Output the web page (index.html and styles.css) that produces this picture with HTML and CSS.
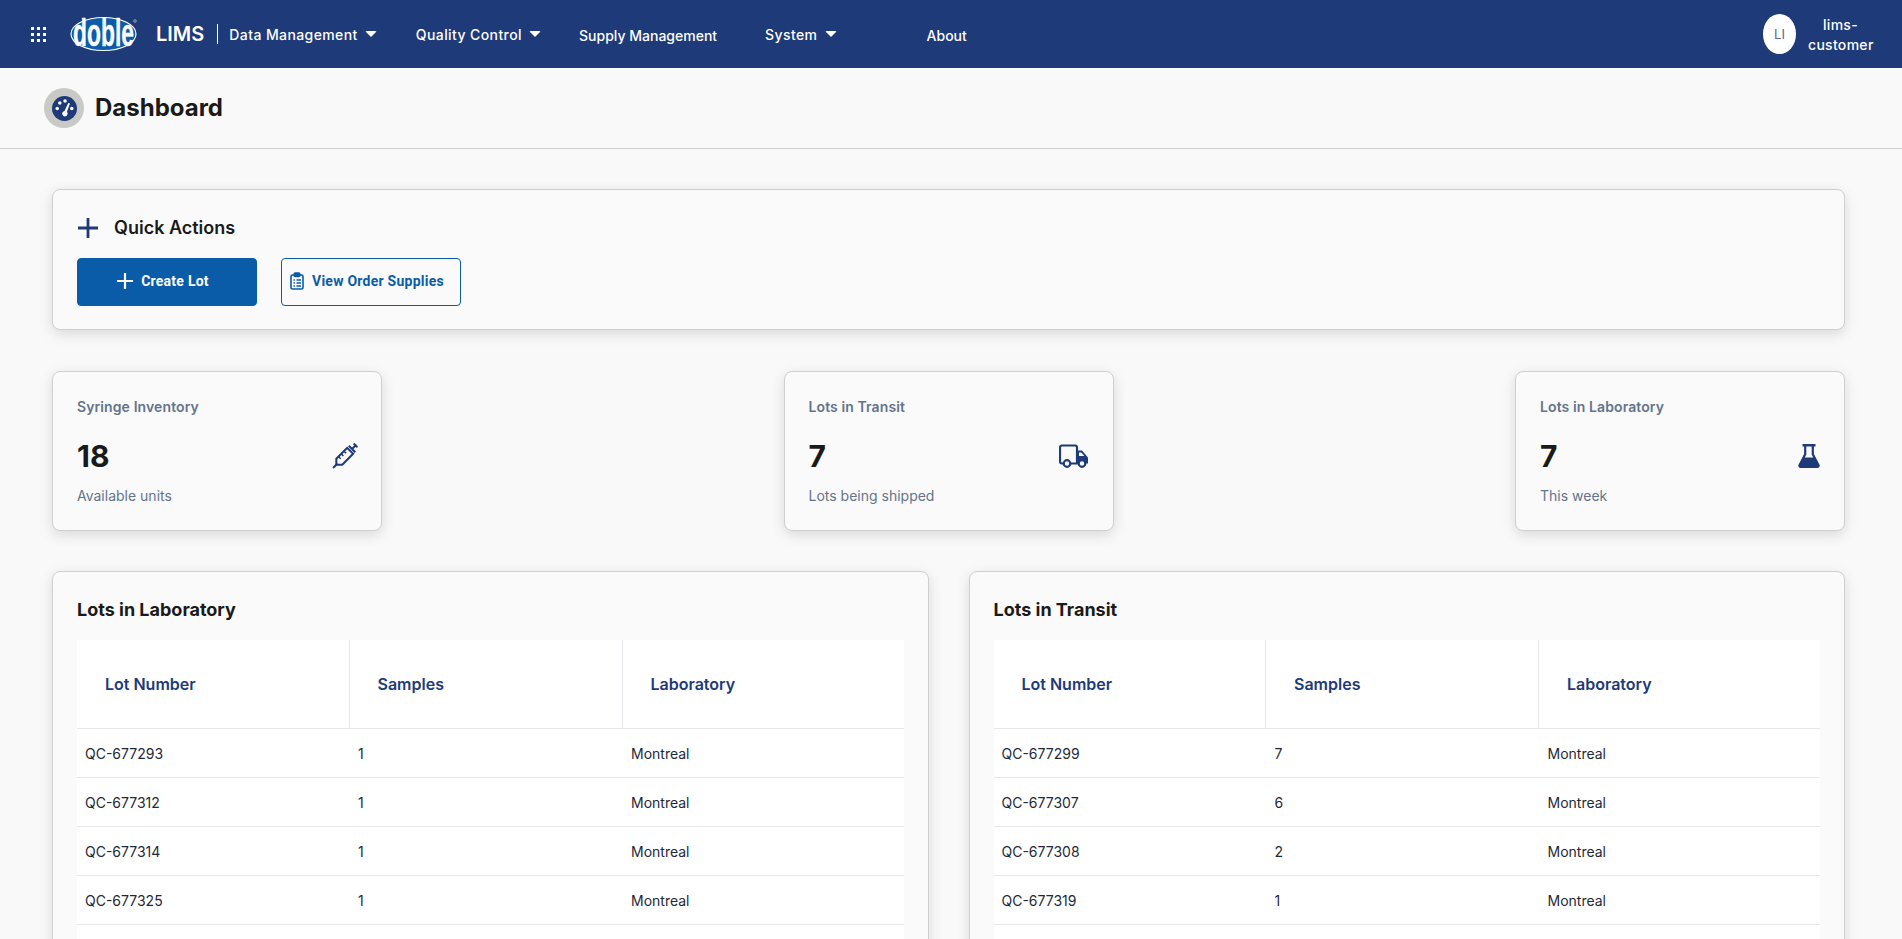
FILE: index.html
```html
<!DOCTYPE html>
<html>
    <head>
        <meta charset="utf-8">
        <title>Dashboard</title>
        <link rel="stylesheet" href="styles.css">
    </head>
    <body>
        <header class="topbar">
            <svg class="apps" viewBox="0 0 15 15" width="15" height="15">
                <g fill="#fff">
                    <rect x="0" y="0" width="3" height="3"/><rect x="6" y="0" width="3" height="3"/><rect x="12" y="0" width="3" height="3"/>
                    <rect x="0" y="6" width="3" height="3"/><rect x="6" y="6" width="3" height="3"/><rect x="12" y="6" width="3" height="3"/>
                    <rect x="0" y="12" width="3" height="3"/><rect x="6" y="12" width="3" height="3"/><rect x="12" y="12" width="3" height="3"/>
                </g>
            </svg>
            <svg class="logo" viewBox="0 -2 68 48" width="68" height="48">
                <ellipse cx="33.500" cy="22" rx="32.500" ry="16.500" fill="#0b5cab" stroke="#fff" stroke-width="1.200"/>
                <text transform="translate(33.500 34) scale(0.600 1)" text-anchor="middle" class="logo-text">doble</text>
                <circle cx="65" cy="9" r="1.300" fill="none" stroke="#fff" stroke-width="0.500"/>
            </svg>
            <span class="brand">LIMS</span>
            <nav class="nav">
                <a class="nav-item nav-first">Data Management <i class="caret"></i></a>
                <a class="nav-item nav-quality">Quality Control <i class="caret"></i></a>
                <a class="nav-item nav-plain nav-supply">Supply Management</a>
                <a class="nav-item nav-system">System <i class="caret"></i></a>
                <a class="nav-item nav-plain">About</a>
            </nav>
            <div class="user">
                <span class="avatar">LI</span>
                <span class="username">lims-<br>customer</span>
            </div>
        </header>

        <div class="titlebar">
            <span class="title-icon">
                <svg viewBox="0 0 24 24" width="25" height="25">
                    <circle cx="12" cy="12" r="12" fill="#1e3a78"/>
                    <g fill="#fff">
                        <circle cx="5" cy="12" r="1.700"/><circle cx="7.500" cy="6.800" r="1.700"/><circle cx="12.500" cy="4.800" r="1.700"/><circle cx="19" cy="12" r="1.700"/>
                        <path d="M15.600 6.600l1.700.6-3 8a2.600 2.600 0 1 1-2.300-.8z"/>
                    </g>
                </svg>
            </span>
            <h1>Dashboard</h1>
        </div>

        <main class="content">
            <section class="card quick">
                <div class="quick-head">
                    <svg viewBox="0 0 20 20" width="20" height="20"><path d="M10 0v20M0 10h20" stroke="#1e3a78" stroke-width="2.800"/></svg>
                    <h2>Quick Actions</h2>
                </div>
                <div class="quick-btns">
                    <button class="btn btn-solid">
                        <svg viewBox="0 0 16 16" width="16" height="16"><path d="M8 0v16M0 8h16" stroke="#fff" stroke-width="2.200"/></svg>
                        Create Lot
                    </button>
                    <button class="btn btn-outline">
                        <svg viewBox="0 0 14 18" width="14" height="18" fill="none" stroke="#0a5ca8" stroke-width="1.600">
                            <rect x="1" y="3" width="12" height="14" rx="1.500"/>
                            <rect x="4.200" y="1" width="5.600" height="3.400" rx="1" fill="#0a5ca8"/>
                            <path d="M3.500 8h1.400M6.500 8h4.500M3.500 11h1.400M6.500 11h4.500M3.500 14h1.400M6.500 14h4.500" stroke-width="1.300"/>
                        </svg>
                        View Order Supplies
                    </button>
                </div>
            </section>

            <section class="stats">
                <div class="card stat">
                    <div class="stat-label">Syringe Inventory</div>
                    <div class="stat-row">
                        <span class="stat-num">18</span>
                        <svg class="syringe" viewBox="0 0 24 24" width="26" height="26" fill="none" stroke="#1e3a78" stroke-width="1.900">
                            <path d="M1 23l4-4M15.500 2.500l6 6M18.700 5.300L22.500 1.500M20 .5l3.500 3.500"/>
                            <path d="M14 4.500l5.500 5.500L9.500 20H4v-5.500z"/>
                            <path d="M11 7.500l2 2M8.500 10l2 2M6 12.500l2 2" stroke-width="1.400"/>
                        </svg>
                    </div>
                    <div class="stat-sub">Available units</div>
                </div>
                <div class="card stat">
                    <div class="stat-label">Lots in Transit</div>
                    <div class="stat-row">
                        <span class="stat-num">7</span>
                        <svg viewBox="0 0 30 24" width="30" height="24">
                            <path d="M4.500 19.500H3a2 2 0 0 1-2-2V3.500a2 2 0 0 1 2-2h13a2 2 0 0 1 2 2v16h-6" fill="none" stroke="#1e3a78" stroke-width="2.200"/>
                            <path d="M18 6.500h5l6 7V19.500h-3.500L18 19z" fill="#1e3a78"/>
                            <path d="M20 8.500h2.300l3 3.500H20z" fill="#fafafa"/>
                            <circle cx="8" cy="19.500" r="3.300" fill="#fafafa" stroke="#1e3a78" stroke-width="2.200"/>
                            <circle cx="23" cy="19.500" r="3.300" fill="#fafafa" stroke="#1e3a78" stroke-width="2.200"/>
                        </svg>
                    </div>
                    <div class="stat-sub">Lots being shipped</div>
                </div>
                <div class="card stat">
                    <div class="stat-label">Lots in Laboratory</div>
                    <div class="stat-row">
                        <span class="stat-num">7</span>
                        <svg viewBox="0 0 22 26" width="22" height="26">
                            <path d="M4.500 1h13v2.600h-1.600v7.400l5.500 10.500a2.400 2.400 0 0 1-2.200 3.500H2.800a2.400 2.400 0 0 1-2.200-3.500L6.100 11V3.600H4.500z" fill="#1e3a78"/>
                            <path d="M8.300 3.600h5.400v7.900l1.500 3H6.800l1.500-3z" fill="#fafafa"/>
                        </svg>
                    </div>
                    <div class="stat-sub">This week</div>
                </div>
            </section>

            <section class="tables">
                <div class="card panel">
                    <h3>Lots in Laboratory</h3>
                    <table>
                        <colgroup><col class="col-a"><col class="col-b"><col></colgroup>
                        <thead><tr><th>Lot Number</th><th>Samples</th><th>Laboratory</th></tr></thead>
                        <tbody>
                            <tr><td>QC-677293</td><td>1</td><td>Montreal</td></tr>
                            <tr><td>QC-677312</td><td>1</td><td>Montreal</td></tr>
                            <tr><td>QC-677314</td><td>1</td><td>Montreal</td></tr>
                            <tr><td>QC-677325</td><td>1</td><td>Montreal</td></tr>
                            <tr><td>&nbsp;</td><td></td><td></td></tr>
                        </tbody>
                    </table>
                </div>
                <div class="card panel">
                    <h3>Lots in Transit</h3>
                    <table>
                        <colgroup><col class="col-a"><col class="col-b"><col></colgroup>
                        <thead><tr><th>Lot Number</th><th>Samples</th><th>Laboratory</th></tr></thead>
                        <tbody>
                            <tr><td>QC-677299</td><td>7</td><td>Montreal</td></tr>
                            <tr><td>QC-677307</td><td>6</td><td>Montreal</td></tr>
                            <tr><td>QC-677308</td><td>2</td><td>Montreal</td></tr>
                            <tr><td>QC-677319</td><td>1</td><td>Montreal</td></tr>
                            <tr><td>&nbsp;</td><td></td><td></td></tr>
                        </tbody>
                    </table>
                </div>
            </section>
        </main>
    </body>
</html>
```

FILE: styles.css
```css
html, body {
    margin: 0;
    height: 100%;
    overflow: hidden;
}
body {
    background: #f9f9f9;
    color: #1a1a1a;
    font-family: "Inter", "Liberation Sans", sans-serif;
}

/* top bar */
.topbar {
    display: flex;
    align-items: center;
    height: 68px;
    background: #1e3a78;
    color: #fff;
    padding: 0 29px 0 31px;
}
.apps {
    margin-right: 24px;
}
.logo {
    margin-right: 18px;
}
.logo-text {
    font-family: "Liberation Sans", sans-serif;
    font-weight: 700;
    font-size: 38px;
    fill: #fff;
    stroke: #fff;
    stroke-width: 0.400;
}
.brand {
    font-size: 20px;
    font-weight: 600;
    padding-right: 13px;
    border-right: 1px solid #fff;
    line-height: 20px;
    margin-right: 11px;
}
.nav {
    display: flex;
    align-items: center;
    font-size: 14px;
    font-weight: 500;
    letter-spacing: 0.4px;
}
.nav-item {
    display: flex;
    align-items: center;
    white-space: pre;
}
.nav-plain {
    padding-top: 2px;
    letter-spacing: 0;
}
.nav-first {
    margin-right: 39px;
}
.nav-quality {
    margin-right: 38px;
}
.nav-supply {
    margin-right: 48px;
}
.nav-system {
    margin-right: 90px;
}
.caret {
    width: 0;
    height: 0;
    margin-left: 3px;
    border-left: 6px solid transparent;
    border-right: 6px solid transparent;
    border-top: 6px solid #fff;
    border-radius: 2px;
}
.user {
    display: flex;
    align-items: center;
    margin-left: auto;
}
.avatar {
    display: flex;
    align-items: center;
    justify-content: center;
    width: 33px;
    height: 40px;
    border-radius: 50%;
    background: #fff;
    color: #5a6a85;
    font-size: 13px;
    margin-right: 12px;
}
.username {
    width: 65px;
    padding-top: 2px;
    text-align: center;
    font-size: 14px;
    font-weight: 500;
    line-height: 20px;
    letter-spacing: 0.3px;
}

/* page title */
.titlebar {
    display: flex;
    align-items: center;
    height: 80px;
    padding-left: 44px;
    border-bottom: 1px solid #cfcfcb;
}
.title-icon {
    display: flex;
    align-items: center;
    justify-content: center;
    width: 40px;
    height: 40px;
    border-radius: 50%;
    background: #c9c9c5;
    margin-right: 11px;
}
h1 {
    margin: 0 0 1px;
    font-size: 24px;
    font-weight: 700;
}

/* main */
.content {
    padding: 40px 57px 0 52px;
}
.card {
    background: #fafafa;
    border: 1px solid #cfcfcf;
    border-radius: 8px;
    box-shadow: 0 4px 14px rgba(0, 0, 0, 0.13);
    box-sizing: border-box;
}
.quick {
    height: 141px;
    padding: 26px 24px;
}
.quick-head {
    display: flex;
    align-items: center;
    height: 24px;
    margin-bottom: 18px;
    padding-left: 1px;
}
h2 {
    margin: 0 0 2px 16px;
    font-size: 18px;
    font-weight: 600;
}
.quick-btns {
    display: flex;
    gap: 24px;
}
.btn {
    display: flex;
    align-items: center;
    justify-content: center;
    gap: 8px;
    width: 180px;
    height: 48px;
    padding: 0 8px 2px 0;
    border-radius: 4px;
    font-family: "Roboto", "Liberation Sans", sans-serif;
    font-size: 14px;
    font-weight: 700;
    letter-spacing: 0.25px;
}
.btn-solid {
    background: #0a5ca8;
    border: 1px solid #0a5ca8;
    color: #fff;
}
.btn-outline {
    background: #fafafa;
    border: 1px solid #0a5ca8;
    color: #0a5ca8;
}

.stats {
    display: flex;
    justify-content: space-between;
    margin-top: 41px;
}
.stat {
    width: 330px;
    height: 160px;
    padding: 25px 24px;
}
.stat-label {
    font-size: 14px;
    font-weight: 600;
    color: #64748b;
    line-height: 20px;
    letter-spacing: 0.1px;
}
.stat-row {
    display: flex;
    align-items: center;
    justify-content: space-between;
    height: 40px;
    margin-top: 19px;
}
.stat-num {
    font-size: 30px;
    font-weight: 700;
}
.syringe {
    margin-right: -1px;
}
.stat-sub {
    font-size: 14px;
    color: #64748b;
    line-height: 20px;
    margin-top: 10px;
}

.tables {
    display: flex;
    gap: 40px;
    margin-top: 40px;
}
.panel {
    flex: 1;
    height: 500px;
    padding: 24px;
}
h3 {
    margin: -1px 0 16px;
    font-size: 18px;
    font-weight: 700;
    line-height: 29px;
}
table {
    width: 100%;
    table-layout: fixed;
    border-collapse: collapse;
    background: #fff;
}
.col-a {
    width: 272px;
}
.col-b {
    width: 273px;
}
th {
    height: 88px;
    padding: 0 0 0 28px;
    text-align: left;
    font-size: 16px;
    font-weight: 600;
    color: #1e3a78;
    border-bottom: 1px solid #e6e8eb;
    border-right: 1px solid #e6e8eb;
    box-sizing: border-box;
}
th:last-child {
    border-right: none;
}
td {
    height: 49px;
    padding: 1px 8px 0;
    font-size: 14px;
    color: #1f2937;
    border-bottom: 1px solid #e6e8eb;
    box-sizing: border-box;
}
td + td {
    padding-left: 9px;
}
```
